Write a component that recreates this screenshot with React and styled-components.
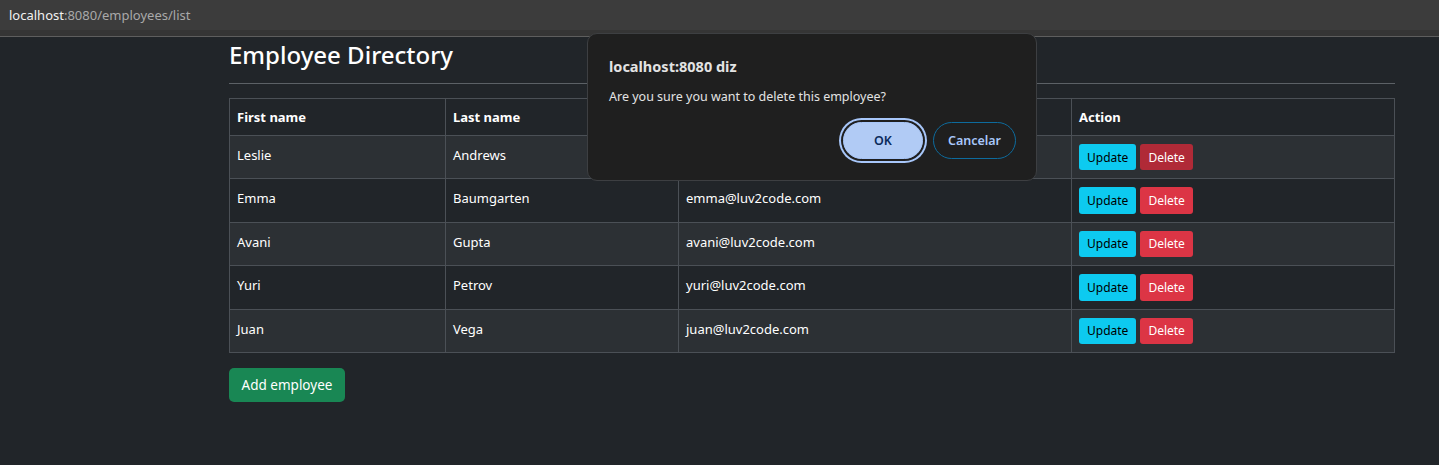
import React from 'react';
import styled, { createGlobalStyle } from 'styled-components';

const GlobalStyle = createGlobalStyle`
    html, body {
        margin: 0;
        padding: 0;
        background: #212529;
        height: 465px;
        overflow: hidden;
    }
    body {
        font-family: "Noto Sans", "Open Sans", sans-serif;
        color: #dee2e6;
    }
`;

const Page = styled.div`
    position: relative;
    width: 1439px;
    height: 465px;
    background: #212529;
`;

const AddressBar = styled.div`
    height: 30px;
    background: #3c3c3c;
    display: flex;
    align-items: center;
    padding-left: 9px;
    font-size: 13px;
    color: #a9a9a9;
    border-bottom: 6px solid #353535;
`;

const Host = styled.span`
    color: #f1f1f1;
`;

const Divider = styled.div`
    height: 1px;
    background: #5e5e5e;
`;

const Container = styled.div`
    width: 1166px;
    margin-left: 229px;
`;

const Title = styled.h3`
    margin: 0;
    padding-top: 3px;
    font-size: 24px;
    font-weight: 500;
    line-height: 30px;
    color: #fff;
`;

const Rule = styled.hr`
    border: 0;
    border-top: 1px solid #5c6166;
    margin: 13px 0 14px;
`;

const Table = styled.table`
    width: 100%;
    table-layout: fixed;
    border-collapse: collapse;
    font-size: 13px;
    color: #fff;
`;

const Th = styled.th`
    box-sizing: border-box;
    text-align: left;
    font-weight: 700;
    padding: 8px 7px;
    border: 1px solid #4b5056;
    line-height: 20px;
    width: ${p => (p.w ? `${p.w}px` : 'auto')};
`;

const Tr = styled.tr`
    background: ${p => (p.striped ? '#2c3034' : '#212529')};
`;

const Td = styled.td`
    padding: 9px 7px 7px;
    border: 1px solid #4b5056;
    line-height: 20px;
    vertical-align: top;
`;

const ActionTd = styled(Td)`
    padding: 8px 7px;
`;

const Btn = styled.button`
    font-family: inherit;
    font-size: 12px;
    padding: 0 8px;
    height: 26.4px;
    border: 0;
    border-radius: 3px;
    margin-right: 4px;
    vertical-align: top;
    background: ${p => p.bg};
    color: ${p => p.fg};
`;

const AddButton = styled.button`
    margin-top: 15px;
    font-family: inherit;
    font-size: 13.5px;
    height: 34px;
    width: 116px;
    border: 0;
    border-radius: 5px;
    background: #198754;
    color: #fff;
`;

const Dialog = styled.div`
    position: absolute;
    left: 587px;
    top: 33px;
    width: 450px;
    height: 148px;
    box-sizing: border-box;
    background: #1f1f1f;
    border: 1px solid #3d3f42;
    border-radius: 10px;
    padding: 21px 20px 0 21px;
    color: #e3e3e3;
`;

const DialogTitle = styled.div`
    font-size: 14.5px;
    font-weight: 700;
    line-height: 22px;
`;

const DialogText = styled.div`
    font-size: 12.5px;
    margin-top: 11px;
    line-height: 18px;
`;

const DialogActions = styled.div`
    display: flex;
    justify-content: flex-end;
    gap: 10px;
    margin-top: 16px;
`;

const DialogBtn = styled.button`
    font-family: inherit;
    font-size: 12.5px;
    font-weight: 600;
    height: 37px;
    width: ${p => p.w}px;
    border-radius: 19px;
    border: 1px solid ${p => (p.primary ? '#a8c7fa' : '#0d6b9d')};
    background: ${p => (p.primary ? '#b1cbf5' : 'transparent')};
    color: ${p => (p.primary ? '#0a2a5a' : '#a8c7fa')};
    box-shadow: ${p => (p.primary ? '0 0 0 2px #1f1f1f, 0 0 0 4px #a8c7fa' : 'none')};
`;

const employees = [
    { first: 'Leslie', last: 'Andrews', email: 'leslie@luv2code.com' },
    { first: 'Emma', last: 'Baumgarten', email: 'emma@luv2code.com' },
    { first: 'Avani', last: 'Gupta', email: 'avani@luv2code.com' },
    { first: 'Yuri', last: 'Petrov', email: 'yuri@luv2code.com' },
    { first: 'Juan', last: 'Vega', email: 'juan@luv2code.com' },
];

export default function App() {
    return (
        <Page>
            <GlobalStyle />
            <AddressBar>
                <Host>localhost</Host>:8080/employees/list
            </AddressBar>
            <Divider />
            <Container>
                <Title>Employee Directory</Title>
                <Rule />
                <Table>
                    <thead>
                        <tr>
                            <Th w={216}>First name</Th>
                            <Th w={233}>Last name</Th>
                            <Th w={393}>Email</Th>
                            <Th>Action</Th>
                        </tr>
                    </thead>
                    <tbody>
                        {employees.map((e, i) => (
                            <Tr key={e.email} striped={i % 2 === 0}>
                                <Td>{e.first}</Td>
                                <Td>{e.last}</Td>
                                <Td>{e.email}</Td>
                                <ActionTd>
                                    <Btn bg="#0dcaf0" fg="#000">Update</Btn>
                                    <Btn bg={i === 0 ? '#b02a37' : '#dc3545'} fg="#fff">Delete</Btn>
                                </ActionTd>
                            </Tr>
                        ))}
                    </tbody>
                </Table>
                <AddButton>Add employee</AddButton>
            </Container>
            <Dialog>
                <DialogTitle>localhost:8080 diz</DialogTitle>
                <DialogText>Are you sure you want to delete this employee?</DialogText>
                <DialogActions>
                    <DialogBtn primary w={80}>OK</DialogBtn>
                    <DialogBtn w={83}>Cancelar</DialogBtn>
                </DialogActions>
            </Dialog>
        </Page>
    );
}
